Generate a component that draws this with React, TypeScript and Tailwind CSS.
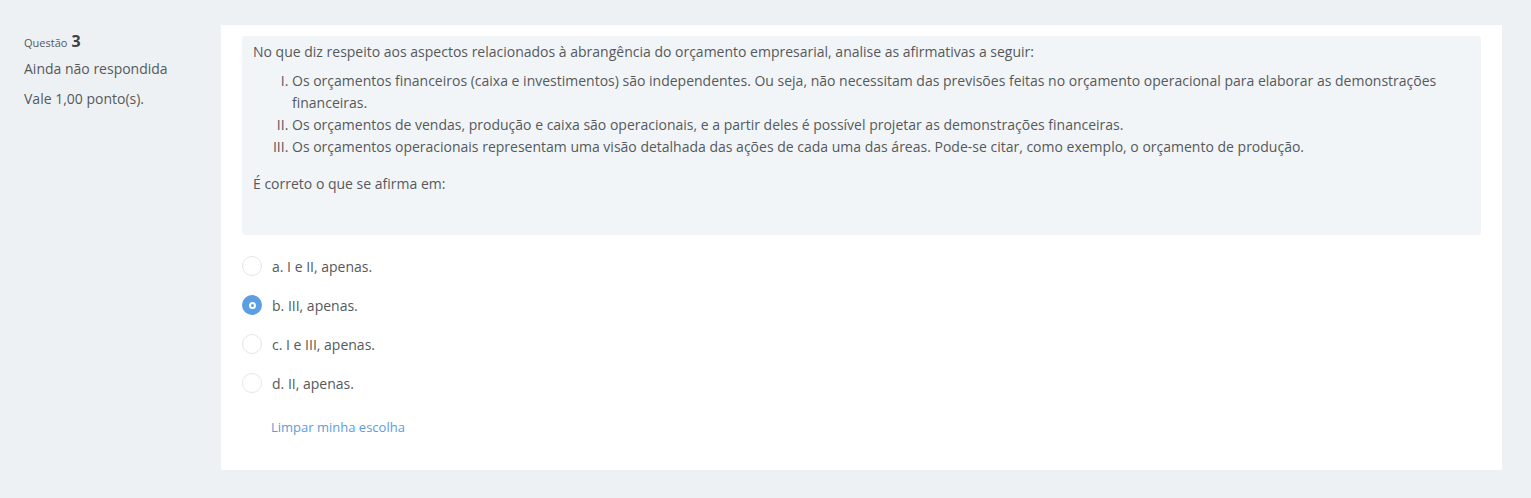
const options = [
  { id: 'a', label: 'a. I e II, apenas.' },
  { id: 'b', label: 'b. III, apenas.' },
  { id: 'c', label: 'c. I e III, apenas.' },
  { id: 'd', label: 'd. II, apenas.' },
]

function Radio({ checked }: { checked: boolean }) {
  if (checked) {
    return (
      <span className="w-[20px] h-[20px] rounded-full bg-[#5c9ee2] flex items-center justify-center shrink-0">
        <span className="w-[7px] h-[7px] rounded-full bg-white flex items-center justify-center">
          <span className="w-[3px] h-[3px] rounded-full bg-[#5c9ee2]" />
        </span>
      </span>
    )
  }
  return <span className="w-[20px] h-[20px] rounded-full border border-[#e3e6e9] bg-white shrink-0" />
}

export default function App() {
  return (
    <div
      className="w-[1531px] h-[498px] bg-[#eef1f3] text-[#55595c] flex pt-[25px]"
      style={{ fontFamily: '"Open Sans", "Noto Sans", sans-serif' }}
    >
      <div className="w-[221px] shrink-0 pl-[24px] pt-[4px]">
        <div className="flex items-baseline gap-[4px] h-[20px]">
          <span className="text-[11px]">Questão</span>
          <span className="text-[16px] font-bold text-[#3d4044]">3</span>
        </div>
        <div className="text-[14px] mt-[11px] leading-[18px]">Ainda não respondida</div>
        <div className="text-[14px] mt-[12px] leading-[18px]">Vale 1,00 ponto(s).</div>
      </div>

      <div className="w-[1281px] h-[445px] bg-white px-[21px] pt-[11px]">
        <div className="bg-[#f2f5f8] rounded-[3px] h-[199px] px-[11px] pt-[5px] text-[14px] leading-[22px]">
          <p>No que diz respeito aos aspectos relacionados à abrangência do orçamento empresarial, analise as afirmativas a seguir:</p>
          <ol className="list-[upper-roman] pl-[39px] mt-[7px] pr-[30px]">
            <li>Os orçamentos financeiros (caixa e investimentos) são independentes. Ou seja, não necessitam das previsões feitas no orçamento operacional para elaborar as demonstrações financeiras.</li>
            <li>Os orçamentos de vendas, produção e caixa são operacionais, e a partir deles é possível projetar as demonstrações financeiras.</li>
            <li>Os orçamentos operacionais representam uma visão detalhada das ações de cada uma das áreas. Pode-se citar, como exemplo, o orçamento de produção.</li>
          </ol>
          <p className="mt-[15px]">É correto o que se afirma em:</p>
        </div>

        <div className="mt-[21px] flex flex-col gap-[19px]">
          {options.map(o => (
            <div key={o.id} className="flex items-center gap-[10px] h-[20px] text-[14px]">
              <Radio checked={o.id === 'b'} />
              <span>{o.label}</span>
            </div>
          ))}
        </div>

        <div className="mt-[25px] pl-[29px] text-[13px] text-[#5d9cdc]">Limpar minha escolha</div>
      </div>
    </div>
  )
}
